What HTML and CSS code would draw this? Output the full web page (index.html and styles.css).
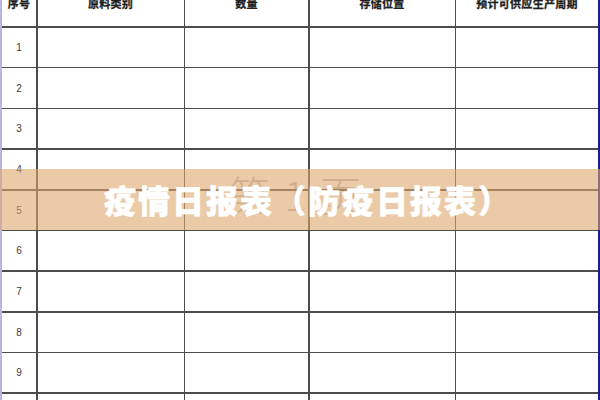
FILE: index.html
```html
<!DOCTYPE html>
<html lang="zh">
<head>
<meta charset="utf-8">
<title>疫情日报表（防疫日报表）</title>
<link rel="stylesheet" href="styles.css">
</head>
<body>
<div class="page">
  <div class="sheet">
    <div class="cell head">序号</div>
    <div class="cell head">原料类别</div>
    <div class="cell head">数量</div>
    <div class="cell head">存储位置</div>
    <div class="cell head">预计可供应生产周期</div>

    <div class="cell num">1</div><div class="cell"></div><div class="cell"></div><div class="cell"></div><div class="cell"></div>
    <div class="cell num">2</div><div class="cell"></div><div class="cell"></div><div class="cell"></div><div class="cell"></div>
    <div class="cell num">3</div><div class="cell"></div><div class="cell"></div><div class="cell"></div><div class="cell"></div>
    <div class="cell num">4</div><div class="cell"></div><div class="cell"></div><div class="cell"></div><div class="cell"></div>
    <div class="cell num">5</div><div class="cell"></div><div class="cell"></div><div class="cell"></div><div class="cell"></div>
    <div class="cell num">6</div><div class="cell"></div><div class="cell"></div><div class="cell"></div><div class="cell"></div>
    <div class="cell num">7</div><div class="cell"></div><div class="cell"></div><div class="cell"></div><div class="cell"></div>
    <div class="cell num">8</div><div class="cell"></div><div class="cell"></div><div class="cell"></div><div class="cell"></div>
    <div class="cell num">9</div><div class="cell"></div><div class="cell"></div><div class="cell"></div><div class="cell"></div>
    <div class="cell num">10</div><div class="cell"></div><div class="cell"></div><div class="cell"></div><div class="cell"></div>
  </div>
  <div class="watermark"><span>第</span><span class="wm-one">1</span><span>页</span></div>
  <div class="banner"><h1 class="title">疫情日报表（防疫日报表）</h1></div>
</div>
</body>
</html>
```
FILE: styles.css
```css
html, body {
  margin: 0;
  padding: 0;
  background: #ffffff;
}
body {
  width: 600px;
  height: 400px;
  overflow: hidden;
  font-family: "Liberation Sans", "Noto Sans CJK SC", sans-serif;
}
.page {
  position: relative;
  width: 600px;
  height: 400px;
  overflow: hidden;
}
.sheet {
  display: grid;
  grid-template-columns: 34px 146px 123px 145px 1fr;
  grid-template-rows: 46.3px repeat(10, 39.2px);
  gap: 1.5px;
  margin-top: -20px;
  background: #4c4c4c;
  border-left: 2px solid #b9b5e4;
  border-right: 2px solid #1c1c8e;
}
.cell {
  background: #ffffff;
  display: flex;
  align-items: center;
  justify-content: center;
}
.head {
  font-family: "Noto Sans CJK SC", sans-serif;
  font-weight: 700;
  font-size: 11px;
  color: #1e1e1e;
  letter-spacing: 0.3px;
  -webkit-text-stroke: 0.3px #1e1e1e;
}
.num {
  font-size: 10px;
  color: #3a3a3a;
}
.watermark {
  position: absolute;
  left: 228px;
  top: 166px;
  display: flex;
  gap: 14px;
  font-family: "Noto Sans CJK SC", sans-serif;
  font-weight: 300;
  font-size: 42px;
  line-height: 56px;
  color: rgba(100, 100, 100, 0.45);
}
.wm-one {
  font-size: 40px;
}
.banner {
  position: absolute;
  left: 0;
  top: 169px;
  width: 600px;
  height: 61px;
  background: rgba(222, 166, 110, 0.6);
  display: flex;
  align-items: center;
  justify-content: center;
}
.title {
  margin: 0;
  font-family: "Noto Sans CJK SC", sans-serif;
  font-weight: 900;
  font-size: 32px;
  line-height: 40px;
  letter-spacing: 2px;
  color: #ffffff;
  -webkit-text-stroke: 0.6px #ffffff;
  text-spacing-trim: space-all;
  padding-left: 16px;
  padding-bottom: 2px;
}
```
